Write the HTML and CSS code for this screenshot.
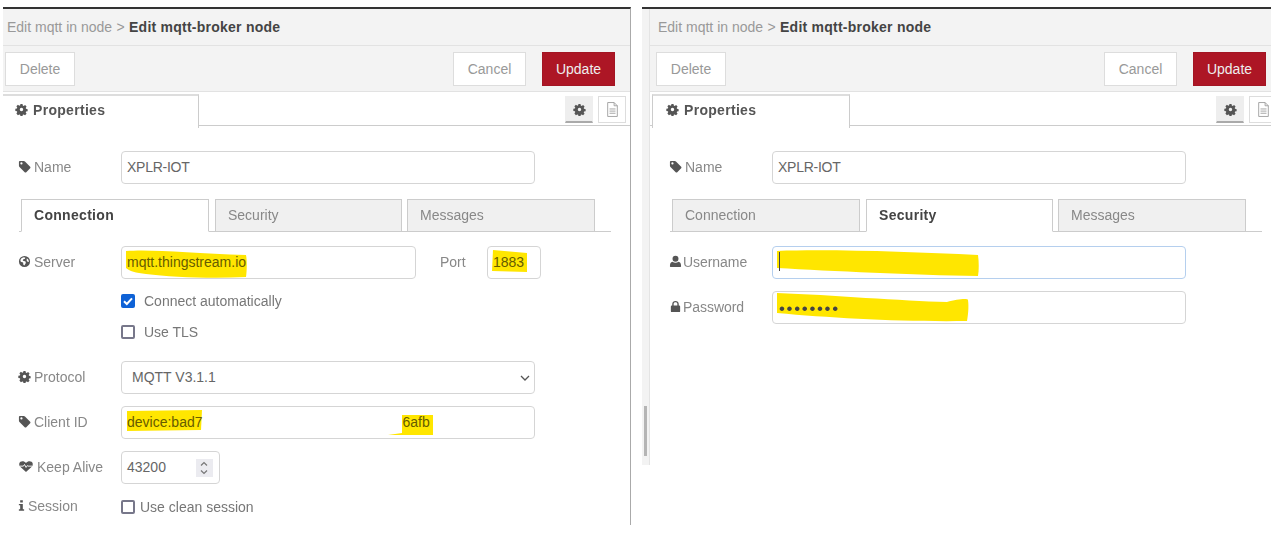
FILE: index.html
```html
<!DOCTYPE html>
<html lang="en">
<head>
  <meta charset="UTF-8" />
  <title>Edit mqtt-broker node</title>
  <link rel="stylesheet" href="styles.css">
</head>
<body>
  <svg class="defs" width="0" height="0">
    <symbol id="i-cog" viewBox="0 0 14 14">
      <path d="M5.7 0h2.6l.4 2 1.1.5 1.8-1.1 1.9 1.9-1.1 1.8.5 1.1 2 .4v2.6l-2 .4-.5 1.1 1.1 1.8-1.9 1.9-1.8-1.1-1.1.5-.4 2H5.7l-.4-2-1.1-.5-1.8 1.1L.5 12.1l1.1-1.8-.5-1.1-2-.4V6.2l2-.4.5-1.1L.5 2.9l1.9-1.9 1.8 1.1 1.1-.5zM7 4.800a2.200 2.200 0 1 0 0 4.400 2.200 2.200 0 0 0 0-4.400z" fill-rule="evenodd" transform="translate(1.100 1.100) scale(.84)"/>
    </symbol>
    <symbol id="i-tag" viewBox="0 0 14 14">
      <path d="M1 2.200C1 1.500 1.500 1 2.200 1h4c.5 0 1 .3 1.300.6l5.600 5.600c.5.5.5 1.200 0 1.700l-4.200 4.200c-.5.5-1.200.5-1.700 0L1.600 7.500C1.300 7.200 1 6.700 1 6.200zM3.700 2.500a1.200 1.200 0 1 0 0 2.400 1.200 1.200 0 0 0 0-2.400z" fill-rule="evenodd"/>
    </symbol>
    <symbol id="i-globe" viewBox="0 0 14 14">
      <path d="M7 1a6 6 0 1 0 0 12A6 6 0 0 0 7 1zM4 3.200l2.400-.8 1.600.6-.8 1.400-1.500.2-.6 1.500 1.500.3 1.800 1-.2 1.800-1.400 2-1-.6-.3-2.400L3 7.200 2.500 5.500zM9.500 3.500l1.700 1.700.6 2-1.200.3-1.300-1.700z" fill-rule="evenodd"/>
    </symbol>
    <symbol id="i-heart" viewBox="0 0 16 14">
      <path d="M8 13 1.800 7.200C.2 5.600.3 3.100 2 1.900c1.900-1.300 4.500-.6 6 1.300 1.500-1.900 4.100-2.600 6-1.300 1.700 1.200 1.800 3.700.2 5.300z"/>
      <path d="M1.500 6.600h3.700l1.200-1.800 1.700 3.200 1.300-2 .7.600h4.400" fill="none" stroke="#fff" stroke-width="1"/>
    </symbol>
    <symbol id="i-info" viewBox="0 0 8 14">
      <path d="M2.500 1h3v2.600h-3zM1 5.200h4.500v6.200H7V13H1v-1.600h1.500V6.800H1z"/>
    </symbol>
    <symbol id="i-user" viewBox="0 0 14 14">
      <circle cx="7" cy="4" r="3.200"/>
      <path d="M2 13c-.7 0-1-.5-1-1.200C1 9.500 1.800 7.500 3.800 7.300c.9.700 2 1.100 3.200 1.100s2.300-.4 3.200-1.100c2 .2 2.800 2.200 2.800 4.500 0 .7-.3 1.200-1 1.200z"/>
    </symbol>
    <symbol id="i-lock" viewBox="0 0 14 14">
      <path d="M3.500 6V4.300C3.500 2.300 5 1 7 1s3.500 1.300 3.500 3.300V6h.5c.6 0 1 .4 1 1v5c0 .6-.4 1-1 1H3c-.6 0-1-.4-1-1V7c0-.6.4-1 1-1zM5 6h4V4.300C9 3.200 8.200 2.500 7 2.500S5 3.200 5 4.300z" fill-rule="evenodd"/>
    </symbol>
    <symbol id="i-doc" viewBox="0 0 12 14">
      <path d="M1.500.5h6l3 3v10h-9zM7.500.5v3h3M3.200 6.500h5.600M3.200 8.500h5.600M3.200 10.500h5.600" fill="none" stroke="currentColor" stroke-width=".8"/>
    </symbol>
  </svg>

  <div class="page">
    <section class="panel panel-left">
      <div class="panel-main">
        <div class="crumbs">Edit mqtt in node <span class="sep">&gt;</span> <b>Edit mqtt-broker node</b></div>
        <div class="actions">
          <div class="btn btn-delete">Delete</div>
          <div class="btn btn-cancel">Cancel</div>
          <div class="btn btn-update">Update</div>
        </div>
        <div class="tabbar">
          <div class="prop-tab"><svg class="ico"><use href="#i-cog"/></svg>Properties</div>
          <div class="side-btn side-on"><svg class="ico"><use href="#i-cog"/></svg></div>
          <div class="side-btn"><svg class="ico doc"><use href="#i-doc"/></svg></div>
        </div>
        <div class="form">
          <div class="row">
            <div class="lbl"><svg class="ico"><use href="#i-tag"/></svg>Name</div>
            <div class="input w-full tight">XPLR-IOT</div>
          </div>
          <div class="subtabs">
            <div class="subtab t1 active">Connection</div>
            <div class="subtab t2">Security</div>
            <div class="subtab t3">Messages</div>
          </div>
          <div class="row">
            <div class="lbl"><svg class="ico"><use href="#i-globe"/></svg>Server</div>
            <div class="input w-server field">
              <svg class="hl"><path d="M5 5C30 3 70 7 125 9 126 14 126 24 125 31 90 33 50 31 25 28 15 27 8 25 5 22Z"/></svg>
              mqtt.thingstream.io
            </div>
            <div class="port-lbl">Port</div>
            <div class="input w-port field">
              <svg class="hl"><path d="M6 4 40 7V26L5 25Z"/></svg>
              1883
            </div>
          </div>
          <div class="check-row first"><span class="box on"><svg viewBox="0 0 14 14"><path d="M3 7.300 5.800 10 11 4.300" fill="none" stroke="#fff" stroke-width="2"/></svg></span><span class="check-text">Connect automatically</span></div>
          <div class="check-row second"><span class="box"></span><span class="check-text">Use TLS</span></div>
          <div class="row">
            <div class="lbl"><svg class="ico"><use href="#i-cog"/></svg>Protocol</div>
            <div class="input w-full select">MQTT V3.1.1
              <svg class="chev" viewBox="0 0 10 6"><path d="M1 1l4 4 4-4" fill="none" stroke="#555" stroke-width="1.300"/></svg>
            </div>
          </div>
          <div class="row">
            <div class="lbl"><svg class="ico"><use href="#i-tag"/></svg>Client ID</div>
            <div class="input w-full field id-row">
              <svg class="hl"><path d="M6 5 81 4 80 24 6 25Z"/><path d="M281 9H312V29H281L267 29 281 27Z"/></svg>
              <span>device:bad7</span><span class="id-tail">6afb</span>
            </div>
          </div>
          <div class="row">
            <div class="lbl"><svg class="ico ico-wide"><use href="#i-heart"/></svg>Keep Alive</div>
            <div class="input w-keep">43200
              <span class="spin"><svg viewBox="0 0 10 18"><path d="M2 6.500 5 3.500 8 6.500M2 11.500 5 14.500 8 11.500" fill="none" stroke="#777" stroke-width="1.200"/></svg></span>
            </div>
          </div>
          <div class="check-row session">
            <div class="lbl"><svg class="ico ico-info"><use href="#i-info"/></svg>Session</div>
            <span class="box"></span><span class="check-text near">Use clean session</span>
          </div>
        </div>
      </div>
    </section>

    <section class="panel panel-right">
      <div class="track"><div class="thumb"></div></div>
      <div class="panel-main">
        <div class="crumbs">Edit mqtt in node <span class="sep">&gt;</span> <b>Edit mqtt-broker node</b></div>
        <div class="actions">
          <div class="btn btn-delete">Delete</div>
          <div class="btn btn-cancel">Cancel</div>
          <div class="btn btn-update">Update</div>
        </div>
        <div class="tabbar">
          <div class="prop-tab"><svg class="ico"><use href="#i-cog"/></svg>Properties</div>
          <div class="side-btn side-on"><svg class="ico"><use href="#i-cog"/></svg></div>
          <div class="side-btn"><svg class="ico doc"><use href="#i-doc"/></svg></div>
        </div>
        <div class="form">
          <div class="row">
            <div class="lbl"><svg class="ico"><use href="#i-tag"/></svg>Name</div>
            <div class="input w-full tight">XPLR-IOT</div>
          </div>
          <div class="subtabs">
            <div class="subtab t1">Connection</div>
            <div class="subtab t2 active">Security</div>
            <div class="subtab t3">Messages</div>
          </div>
          <div class="row">
            <div class="lbl lbl-cred"><svg class="ico"><use href="#i-user"/></svg>Username</div>
            <div class="input w-full field focus">
              <svg class="hl"><path d="M5 5C60 3 140 6 206 9 207 16 207 24 206 30 140 29 60 25 5 22Z"/></svg>
              <span class="caret"></span>
            </div>
          </div>
          <div class="row">
            <div class="lbl lbl-cred"><svg class="ico"><use href="#i-lock"/></svg>Password</div>
            <div class="input w-full field">
              <svg class="hl"><path d="M5 2C60 4 130 10 175 11 185 8 196 7 196 9 197 16 196 25 195 30 130 31 60 27 5 22Z"/></svg>
              <span class="dots">••••••••</span>
            </div>
          </div>
        </div>
      </div>
    </section>
  </div>
</body>
</html>
```

FILE: styles.css
```css
* {
  margin: 0;
  padding: 0;
  box-sizing: border-box;
  font-family: "Liberation Sans", Arial, sans-serif;
}

body {
  background: #fff;
  color: #666;
  font-size: 14px;
}

.defs {
  position: absolute;
}

.page {
  display: flex;
  align-items: flex-start;
  padding-top: 7px;
  filter: blur(.4px);
}

.panel {
  display: flex;
  flex-shrink: 0;
  overflow: hidden;
  border-top: 2px solid #333;
}

.panel-left {
  width: 628px;
  height: 518px;
  margin-left: 3px;
  border-right: 1px solid #aaa;
  --pad: 2px;
}

.panel-right {
  width: 629px;
  height: 458px;
  margin-left: 11px;
  --pad: 6px;
}

.track {
  flex: 0 0 8px;
  background: #f3f3f3;
  border-right: 1px solid #e4e4e4;
  padding: 397px 0 0 2px;
}

.thumb {
  width: 3px;
  height: 50px;
  background: #b5b5b5;
}

.panel-main {
  flex: 1;
  min-width: 0;
}

/* top bars */
.crumbs {
  height: 37px;
  padding: 10px 0 0 calc(var(--pad) + 2px);
  background: #f3f3f3;
  border-bottom: 1px solid #e2e2e2;
  color: #999;
  line-height: 17px;
  white-space: nowrap;
}

.crumbs b {
  color: #444;
  letter-spacing: .24px;
}

.sep {
  margin: 0 .5px;
}

.actions {
  display: flex;
  height: 46px;
  padding: 6px 0 0 var(--pad);
  background: #f3f3f3;
  border-bottom: 1px solid #e2e2e2;
}

.btn {
  flex-shrink: 0;
  height: 34px;
  line-height: 32px;
  text-align: center;
  background: #fff;
  border: 1px solid #ddd;
  color: #999;
}

.btn-delete {
  width: 70px;
  margin-right: 378px;
}

.btn-cancel {
  width: 73px;
  margin-right: 16px;
}

.btn-update {
  width: 73px;
  background: #ad1625;
  border-color: #a31523;
  color: #eee;
}

.tabbar {
  display: flex;
  height: 34px;
  border-bottom: 1px solid #ccc;
}

.prop-tab {
  flex-shrink: 0;
  width: 198px;
  height: 34px;
  margin: 2px 366px 0 calc(var(--pad) - 4px);
  padding-left: 13px;
  line-height: 28px;
  background: #fff;
  border: 1px solid #ccc;
  border-top: 2px solid #ddd;
  border-bottom: none;
  color: #555;
  font-weight: bold;
  letter-spacing: .3px;
}

.prop-tab .ico {
  margin-right: 5px;
}

.side-btn {
  display: flex;
  flex-shrink: 0;
  align-items: center;
  justify-content: center;
  width: 28px;
  height: 27px;
  margin-top: 4px;
  margin-right: 5px;
  border: 1px solid #ddd;
  background: #fff;
}

.side-on {
  background: #eee;
  border-color: #eee;
  border-bottom: 2px solid #aaa;
}

.ico {
  flex-shrink: 0;
  width: 13px;
  height: 13px;
  margin-right: 3px;
  fill: #555;
  vertical-align: -1px;
}

.side-btn .ico {
  margin: 0;
}

.side-btn .doc {
  width: 13px;
  height: 15px;
  color: #999;
}

.ico-wide {
  width: 16px;
}

.ico-info {
  width: 7px;
  margin-right: 3px;
}

/* form */
.form {
  padding: 25px 0 0 calc(var(--pad) + 13px);
}

.row {
  display: flex;
  align-items: center;
  margin-bottom: 12px;
}

.lbl {
  flex: 0 0 103px;
  padding-bottom: 2px;
  color: #888;
  white-space: nowrap;
}

.lbl-cred {
  letter-spacing: -.05px;
}

.lbl-cred .ico {
  margin-right: 1px;
}

.input {
  flex-shrink: 0;
  position: relative;
  height: 33px;
  padding-left: 5px;
  line-height: 31px;
  background: #fff;
  border: 1px solid #d5d5d5;
  border-radius: 4px;
  color: #666;
}

.tight {
  letter-spacing: -.25px;
}

.w-full {
  width: 414px;
}

.w-server {
  width: 295px;
}

.w-port {
  width: 54px;
}

.w-keep {
  width: 99px;
}

.port-lbl {
  width: 71px;
  padding: 0 0 2px 24px;
  color: #888;
}

.select {
  padding-left: 10px;
}

.chev {
  position: absolute;
  top: 13px;
  right: 4px;
  width: 10px;
  height: 6px;
}

.field .hl {
  position: absolute;
  top: -1px;
  left: -1px;
  width: 100%;
  height: 100%;
  overflow: visible;
  fill: #ffe600;
  mix-blend-mode: multiply;
}

.id-row {
  display: flex;
}

.id-tail {
  margin-left: 200px;
}

.focus {
  border-color: #b5cfee;
}

.caret {
  position: absolute;
  top: 5px;
  left: 6px;
  width: 1px;
  height: 19px;
  background: #444;
}

.dots {
  position: absolute;
  top: 1px;
  left: 6px;
  font-size: 17px;
  letter-spacing: 1.650px;
  color: #444;
}

.spin {
  position: absolute;
  top: 7px;
  right: 6px;
  width: 17px;
  height: 18px;
  padding-left: 3px;
  background: #ebebf0;
}

.spin svg {
  display: block;
  width: 10px;
  height: 18px;
}

.subtabs {
  display: flex;
  width: 592px;
  height: 33px;
  margin: 15px 0 14px 1px;
  padding-left: 2px;
  border-bottom: 1px solid #ccc;
}

.subtab {
  height: 33px;
  padding-left: 12px;
  line-height: 31px;
  background: #f0f0f0;
  border: 1px solid #ccc;
  color: #888;
}

.t1 {
  width: 188px;
  margin-right: 6px;
}

.t2 {
  width: 187px;
  margin-right: 5px;
}

.t3 {
  width: 188px;
}

.subtab.active {
  background: #fff;
  border-bottom-color: #fff;
  color: #444;
  font-weight: bold;
  letter-spacing: .3px;
}

.check-row {
  display: flex;
  align-items: center;
  height: 14px;
  padding-left: 103px;
}

.first {
  margin-top: 15px;
}

.second {
  margin: 17px 0 22px;
}

.session {
  margin-top: 16px;
  padding-left: 0;
}

.box {
  flex-shrink: 0;
  width: 14px;
  height: 14px;
  border: 2px solid #77778a;
  border-radius: 2px;
  background: #fff;
}

.box.on {
  background: #0f62d6;
  border: none;
}

.box svg {
  display: block;
}

.check-text {
  margin-left: 9px;
  color: #777;
}

.near {
  margin-left: 5px;
}
```
